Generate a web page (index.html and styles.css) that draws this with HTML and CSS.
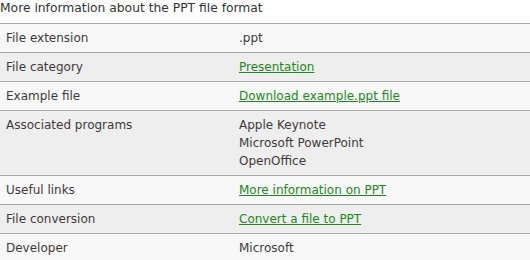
FILE: index.html
```html
<!DOCTYPE html>
<html lang="en">
<head>
<meta charset="UTF-8">
<title>PPT file format</title>
<link rel="stylesheet" href="styles.css">
</head>
<body>

<!-- file info table -->
<div class="info">
  <h2 class="info-title">More information about the PPT file format</h2>
  <table class="info-table">
    <tr><td class="key">File extension</td><td>.ppt</td></tr>
    <tr><td class="key">File category</td><td><a href="#">Presentation</a></td></tr>
    <tr><td class="key">Example file</td><td><a href="#">Download example.ppt file</a></td></tr>
    <tr><td class="key">Associated programs</td><td>Apple Keynote<br>Microsoft PowerPoint<br>OpenOffice</td></tr>
    <tr><td class="key">Useful links</td><td><a href="#">More information on PPT</a></td></tr>
    <tr><td class="key">File conversion</td><td><a href="#">Convert a file to PPT</a></td></tr>
    <tr><td class="key">Developer</td><td>Microsoft</td></tr>
  </table>
</div>

</body>
</html>
```

FILE: styles.css
```css
/* -------- RESET -------- */
*{margin:0;padding:0;box-sizing:border-box}

body{
  font-family:"DejaVu Sans",Verdana,sans-serif;
  color:#3f3a3a;
  background:#fff;
}

/* -------- TITLE -------- */
.info-title{
  font-size:12.3px;font-weight:normal;color:#333;
  height:24px;line-height:16px;
  border-bottom:1px solid #aaa;
}

/* -------- TABLE -------- */
.info-table{width:100%;border-collapse:collapse;font-size:12px}
.info-table td{
  padding:5px 6px;line-height:18px;vertical-align:top;
  border-bottom:1px solid #aaa;
}
.info-table tr:nth-child(odd) td{background:#f8f8f8}
.info-table tr:nth-child(even) td{background:#eee}
.info-table .key{width:233px}
.info-table a{color:#1a8a1a;text-decoration:underline}
```
